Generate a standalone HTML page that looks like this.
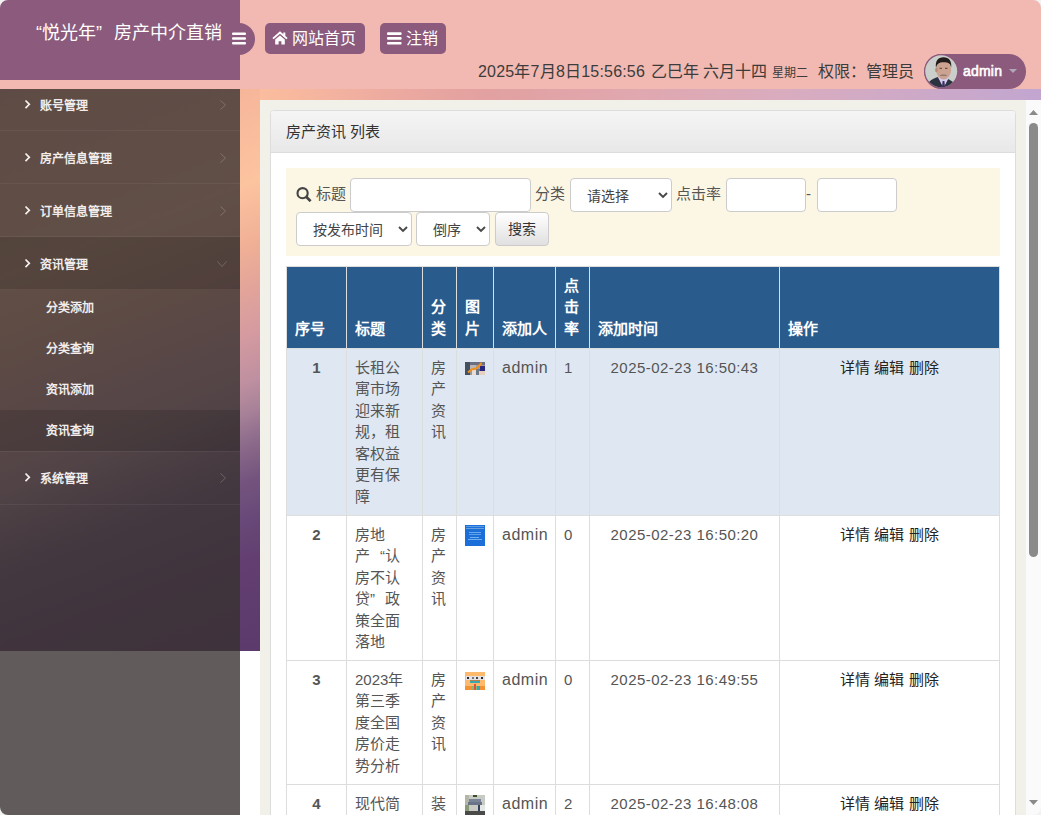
<!DOCTYPE html>
<html lang="zh-CN"><head><meta charset="utf-8"><style>
*{box-sizing:border-box;margin:0;padding:0}
html,body{width:1041px;height:815px;overflow:hidden;background:#fff;font-family:"Liberation Sans",sans-serif;}
.a{position:absolute;white-space:nowrap}
#bg{position:absolute;left:0;top:0;width:1041px;height:651px;
 background:linear-gradient(159deg,#f0ac96 0%,#f2b098 9.1%,#f6b69a 17.7%,#fdc4a0 26.5%,#f0b096 32.3%,#e2a49a 36.6%,#d49aa0 41.0%,#bf90a0 45.3%,#a88298 48.2%,#8e6c8c 51.0%,#74547e 54.8%,#684878 58.6%,#623f70 62.4%,#5c3a6c 71.0%,#5a386a 100%);}
#strip{position:absolute;left:260px;top:89px;width:781px;height:11px;background:linear-gradient(90deg,#fbbd9e 0%,#eba9a0 18%,#e2a0a0 29%,#e0a8b0 49%,#d8acc0 69%,#c2a6d0 100%)}
#header{position:absolute;left:0;top:0;width:1041px;height:89px;background:#f1b9b1;}
#logo{position:absolute;left:0;top:0;width:240px;height:80px;background:#8b5a7c;}
#toggle{position:absolute;left:223px;top:23px;width:32px;height:32px;border-radius:50%;background:#8b5a7c}
.btn{position:absolute;top:23px;height:31px;background:#8b5a7c;border-radius:5px;}
.w{color:#fff}
.info{color:#3c3c3c;font-size:16px;line-height:20px;top:62px}
#pill{position:absolute;left:924px;top:54px;width:102px;height:34.5px;border-radius:17.25px;background:#8b5a7c}
#sidebar{position:absolute;left:0;top:89px;width:240px;height:726px;background:rgba(55,48,47,0.79);overflow:hidden}
.mi{color:#f2ecea;font-size:12px;font-weight:bold;line-height:16px}
.sep{position:absolute;left:0;width:240px;height:1px;background:rgba(255,255,255,0.055)}
#frame{position:absolute;left:260px;top:100px;width:781px;height:715px;background:#f1f0e9}
#panel{position:absolute;left:270px;top:110px;width:746px;height:720px;background:#fff;border:1px solid #ddd;border-radius:4px}
#phead{position:absolute;left:0;top:0;width:744px;height:42px;background:linear-gradient(#f5f5f5,#e8e8e8);border-bottom:1px solid #ddd;border-radius:3px 3px 0 0}
#scroll{position:absolute;left:1026px;top:100px;width:15px;height:715px;background:#fafafa}
.lbl{color:#555;font-size:15px;line-height:20px}
.inp{position:absolute;background:#fff;border:1px solid #ccc;border-radius:4px}
.sel{position:absolute;background:#fff;border:1px solid #ccc;border-radius:4px;color:#555;font-size:14px}
.th{color:#fff;font-weight:bold;font-size:15px;line-height:21.43px}
.td{color:#555;font-size:15px;line-height:21.43px}
.op{color:#222;font-size:15px;line-height:21.43px}
</style></head><body>
<div id="bg"></div><div id="strip"></div>
<div id="header">
<div id="toggle"></div><div id="logo"></div>
<div class="a w" style="left:36px;top:22px;font-size:18px;line-height:22px">“悦光年”</div>
<div class="a w" style="left:114px;top:22px;font-size:18px;line-height:22px">房产中介直销</div>
<svg class="a" style="left:232px;top:32px" width="14" height="13" viewBox="0 0 14 13"><rect x="0" y="0.5" width="14" height="2.6" rx="1" fill="#fff"/><rect x="0" y="5.2" width="14" height="2.6" rx="1" fill="#fff"/><rect x="0" y="9.9" width="14" height="2.6" rx="1" fill="#fff"/></svg>
<div class="btn" style="left:265px;width:100px"></div>
<svg class="a" style="left:272px;top:31px" width="16" height="14" viewBox="0 0 16 14"><path d="M1 7.6 L8 1.6 L15 7.6" fill="none" stroke="#fff" stroke-width="1.9" stroke-linejoin="miter"/><rect x="11.3" y="1.5" width="2" height="4" fill="#fff"/><path d="M3.2 8.6 L8 4.4 L12.8 8.6 V13.6 H9.4 V10.2 H6.6 V13.6 H3.2 Z" fill="#fff"/></svg>
<div class="a w" style="left:292px;top:29px;font-size:16px;line-height:20px">网站首页</div>
<div class="btn" style="left:380px;width:66px"></div>
<svg class="a" style="left:387px;top:32px" width="15" height="13" viewBox="0 0 15 13"><rect x="0" y="0.3" width="14.6" height="2.6" rx="1" fill="#fff"/><rect x="0" y="5.1" width="14.6" height="2.6" rx="1" fill="#fff"/><rect x="0" y="9.9" width="14.6" height="2.6" rx="1" fill="#fff"/></svg>
<div class="a w" style="left:406px;top:29px;font-size:16px;line-height:20px">注销</div>
<div class="a info" style="left:478px;letter-spacing:0.2px">2025年7月8日15:56:56</div>
<div class="a info" style="left:651px">乙巳年</div>
<div class="a info" style="left:703px">六月十四</div>
<div class="a info" style="left:772px;font-size:12px;top:63px">星期二</div>
<div class="a info" style="left:818px">权限：管理员</div>
<div id="pill"></div>
<svg class="a" style="left:924px;top:54px" width="35" height="35" viewBox="0 0 35 35">
<defs><clipPath id="cc"><circle cx="17.2" cy="17.3" r="16"/></clipPath></defs>
<circle cx="17.2" cy="17.3" r="17" fill="#8b5a7c"/>
<g clip-path="url(#cc)"><rect width="35" height="35" fill="#cbcfcc"/>
<path d="M3 35 L5 28 C8 25 11 24 14 23 L19.5 33 L24 25 C26 26 28 27 30 29 L31 35 Z" fill="#2d3240"/>
<path d="M14 23 L19.5 34 L24 25 L22.5 23.5 Z" fill="#d4ccee"/>
<path d="M18.6 27 L20.4 27 L21.2 35 L17.8 35 Z" fill="#3c2e66"/>
<ellipse cx="19.6" cy="15.8" rx="7.6" ry="9.6" fill="#cca290"/>
<ellipse cx="12.4" cy="16" rx="1.3" ry="2.3" fill="#b88a78"/>
<path d="M12 14 C11 7 14 3.2 19.5 3.2 C25 3.2 28 7 27.2 13.5 C26.5 9.5 24.5 8.2 19.5 8.2 C15 8.2 13 9.5 12 14 Z" fill="#221c1c"/>
<path d="M15.5 21.5 C17.5 20.3 21.5 20.3 23.5 21.5 C21.5 22.3 17.5 22.3 15.5 21.5 Z" fill="#8c7a72"/>
<path d="M15.5 14.3 H18 M21 14.3 H23.5" stroke="#5a4038" stroke-width="1"/>
</g></svg>
<div class="a w" style="left:963px;top:62px;font-size:14px;line-height:18px;-webkit-text-stroke:0.6px #fff;letter-spacing:0.2px">admin</div>
<svg class="a" style="left:1009px;top:69px" width="8" height="4" viewBox="0 0 8 4"><path d="M0 0 H8 L4 4 Z" fill="#b0a8b8"/></svg>
</div>
<div id="sidebar">
<div class="a" style="left:0;top:148px;width:240px;height:52px;background:rgba(0,0,0,0.13)"></div>
<div class="a" style="left:0;top:321px;width:240px;height:41px;background:rgba(0,0,0,0.13)"></div>
<div class="sep" style="top:41px"></div>
<div class="sep" style="top:94px"></div>
<div class="sep" style="top:147px"></div>
<div class="sep" style="top:362px"></div>
<div class="sep" style="top:415px"></div>
<div class="a mi" style="left:40px;top:8.5px">账号管理</div>
<svg class="a" style="left:24px;top:9.5px" width="7.3" height="10.6" viewBox="0 0 7.3 10.6"><path d="M1.5 1.5 L5.3 5.3 L1.5 9.1" fill="none" stroke="#f5f0ee" stroke-width="1.7"/></svg>
<svg class="a" style="left:219.5px;top:10.5px" width="7" height="10" viewBox="0 0 7 10"><path d="M0.5 0.5 L5.5 5 L0.5 9.5" fill="none" stroke="rgba(255,255,255,0.2)" stroke-width="1"/></svg>
<div class="a mi" style="left:40px;top:61.5px">房产信息管理</div>
<svg class="a" style="left:24px;top:62.5px" width="7.3" height="10.6" viewBox="0 0 7.3 10.6"><path d="M1.5 1.5 L5.3 5.3 L1.5 9.1" fill="none" stroke="#f5f0ee" stroke-width="1.7"/></svg>
<svg class="a" style="left:219.5px;top:63.5px" width="7" height="10" viewBox="0 0 7 10"><path d="M0.5 0.5 L5.5 5 L0.5 9.5" fill="none" stroke="rgba(255,255,255,0.2)" stroke-width="1"/></svg>
<div class="a mi" style="left:40px;top:114.5px">订单信息管理</div>
<svg class="a" style="left:24px;top:115.5px" width="7.3" height="10.6" viewBox="0 0 7.3 10.6"><path d="M1.5 1.5 L5.3 5.3 L1.5 9.1" fill="none" stroke="#f5f0ee" stroke-width="1.7"/></svg>
<svg class="a" style="left:219.5px;top:116.5px" width="7" height="10" viewBox="0 0 7 10"><path d="M0.5 0.5 L5.5 5 L0.5 9.5" fill="none" stroke="rgba(255,255,255,0.2)" stroke-width="1"/></svg>
<div class="a mi" style="left:40px;top:167.5px">资讯管理</div>
<svg class="a" style="left:24px;top:168.5px" width="7.3" height="10.6" viewBox="0 0 7.3 10.6"><path d="M1.5 1.5 L5.3 5.3 L1.5 9.1" fill="none" stroke="#f5f0ee" stroke-width="1.7"/></svg>
<svg class="a" style="left:216.5px;top:171.5px" width="10" height="6" viewBox="0 0 10 6"><path d="M0.5 0.5 L5 5.5 L9.5 0.5" fill="none" stroke="rgba(255,255,255,0.2)" stroke-width="1"/></svg>
<div class="a mi" style="left:40px;top:381.5px">系统管理</div>
<svg class="a" style="left:24px;top:382.5px" width="7.3" height="10.6" viewBox="0 0 7.3 10.6"><path d="M1.5 1.5 L5.3 5.3 L1.5 9.1" fill="none" stroke="#f5f0ee" stroke-width="1.7"/></svg>
<svg class="a" style="left:219.5px;top:383.5px" width="7" height="10" viewBox="0 0 7 10"><path d="M0.5 0.5 L5.5 5 L0.5 9.5" fill="none" stroke="rgba(255,255,255,0.2)" stroke-width="1"/></svg>
<div class="a mi" style="left:46px;top:211.0px">分类添加</div>
<div class="a mi" style="left:46px;top:252.0px">分类查询</div>
<div class="a mi" style="left:46px;top:293.0px">资讯添加</div>
<div class="a mi" style="left:46px;top:334.0px">资讯查询</div>
</div>
<div id="frame"></div>
<div id="panel"><div id="phead"></div></div>
<div class="a" style="left:286px;top:122px;color:#333;font-size:15px;line-height:20px">房产资讯 列表</div>
<div class="a" style="left:286px;top:168px;width:714px;height:88px;background:#fcf6e4"></div>
<svg class="a" style="left:296px;top:186px" width="16" height="16" viewBox="0 0 16 16"><circle cx="6.6" cy="7.2" r="5.1" fill="none" stroke="#444" stroke-width="2.1"/><path d="M10.2 10.8 L14.6 15.2" stroke="#444" stroke-width="2.7" stroke-linecap="butt"/></svg>
<div class="a lbl" style="left:315.5px;top:184px">标题</div>
<div class="inp" style="left:350px;top:178px;width:181px;height:34px"></div>
<div class="a lbl" style="left:535px;top:184px">分类</div>
<div class="sel" style="left:570px;top:178px;width:102px;height:34px"></div><div class="a" style="left:587px;top:186.5px;color:#444;font-size:14px;line-height:18px">请选择</div><svg class="a" style="left:658px;top:192.0px" width="10" height="7" viewBox="0 0 10 7"><path d="M1 1 L5 5 L9 1" fill="none" stroke="#484848" stroke-width="1.9"/></svg>
<div class="a lbl" style="left:676px;top:184px">点击率</div>
<div class="inp" style="left:726px;top:178px;width:80px;height:34px"></div>
<div class="a lbl" style="left:806px;top:184px">-</div>
<div class="inp" style="left:817px;top:178px;width:80px;height:34px"></div>
<div class="sel" style="left:296px;top:212px;width:116px;height:34px"></div><div class="a" style="left:313px;top:220.5px;color:#444;font-size:14px;line-height:18px">按发布时间</div><svg class="a" style="left:398px;top:226.0px" width="10" height="7" viewBox="0 0 10 7"><path d="M1 1 L5 5 L9 1" fill="none" stroke="#484848" stroke-width="1.9"/></svg>
<div class="sel" style="left:416px;top:212px;width:74px;height:34px"></div><div class="a" style="left:433px;top:220.5px;color:#444;font-size:14px;line-height:18px">倒序</div><svg class="a" style="left:476px;top:226.0px" width="10" height="7" viewBox="0 0 10 7"><path d="M1 1 L5 5 L9 1" fill="none" stroke="#484848" stroke-width="1.9"/></svg>
<div class="a" style="left:495px;top:212px;width:54px;height:34px;border:1px solid #ccc;border-radius:4px;background:linear-gradient(#fff,#e0e0e0)"></div>
<div class="a" style="left:508px;top:220px;color:#333;font-size:14px;line-height:18px">搜索</div>
<div class="a" style="left:286px;top:266px;width:714px;height:82px;background:#2a5b8d"></div>
<div class="a" style="left:286px;top:348px;width:714px;height:167px;background:#dfe8f2"></div>
<div class="a" style="left:286px;top:266px;width:714px;height:1px;background:#ddd"></div>
<div class="a" style="left:286px;top:348px;width:714px;height:1px;background:#ddd"></div>
<div class="a" style="left:286px;top:515px;width:714px;height:1px;background:#ddd"></div>
<div class="a" style="left:286px;top:660px;width:714px;height:1px;background:#ddd"></div>
<div class="a" style="left:286px;top:784px;width:714px;height:1px;background:#ddd"></div>
<div class="a" style="left:286px;top:266px;width:1px;height:560px;background:#ddd"></div>
<div class="a" style="left:346px;top:266px;width:1px;height:560px;background:#ddd"></div>
<div class="a" style="left:422px;top:266px;width:1px;height:560px;background:#ddd"></div>
<div class="a" style="left:456px;top:266px;width:1px;height:560px;background:#ddd"></div>
<div class="a" style="left:493px;top:266px;width:1px;height:560px;background:#ddd"></div>
<div class="a" style="left:555px;top:266px;width:1px;height:560px;background:#ddd"></div>
<div class="a" style="left:589px;top:266px;width:1px;height:560px;background:#ddd"></div>
<div class="a" style="left:779px;top:266px;width:1px;height:560px;background:#ddd"></div>
<div class="a" style="left:999px;top:266px;width:1px;height:560px;background:#ddd"></div>
<div class="a th" style="left:295px;top:317.57px">序号</div>
<div class="a th" style="left:355px;top:317.57px">标题</div>
<div class="a th" style="left:431px;top:296.14px">分<br>类</div>
<div class="a th" style="left:465px;top:296.14px">图<br>片</div>
<div class="a th" style="left:502px;top:317.57px">添加人</div>
<div class="a th" style="left:564px;top:274.71px">点<br>击<br>率</div>
<div class="a th" style="left:598px;top:317.57px">添加时间</div>
<div class="a th" style="left:788px;top:317.57px">操作</div>
<div class="a td" style="left:286px;width:61px;text-align:center;top:357px;font-weight:bold">1</div>
<div class="a td" style="left:355px;top:357px">长租公<br>寓市场<br>迎来新<br>规，租<br>客权益<br>更有保<br>障</div>
<div class="a td" style="left:431px;top:357px">房<br>产<br>资<br>讯</div>
<div class="a td" style="left:502px;top:357px;font-size:16px;letter-spacing:0.5px">admin</div>
<div class="a td" style="left:564px;top:357px">1</div>
<div class="a td" style="left:589px;width:191px;text-align:center;top:357px;letter-spacing:0.45px">2025-02-23 16:50:43</div>
<div class="a op" style="left:779px;width:221px;text-align:center;top:357px">详情 编辑 删除</div>
<div class="a td" style="left:286px;width:61px;text-align:center;top:524px;font-weight:bold">2</div>
<div class="a td" style="left:355px;top:524px">房地<br>产<span style="display:inline-block;width:15px;text-align:right">“</span>认<br>房不认<br>贷<span style="display:inline-block;width:15px;text-align:left">”</span>政<br>策全面<br>落地</div>
<div class="a td" style="left:431px;top:524px">房<br>产<br>资<br>讯</div>
<div class="a td" style="left:502px;top:524px;font-size:16px;letter-spacing:0.5px">admin</div>
<div class="a td" style="left:564px;top:524px">0</div>
<div class="a td" style="left:589px;width:191px;text-align:center;top:524px;letter-spacing:0.45px">2025-02-23 16:50:20</div>
<div class="a op" style="left:779px;width:221px;text-align:center;top:524px">详情 编辑 删除</div>
<div class="a td" style="left:286px;width:61px;text-align:center;top:669px;font-weight:bold">3</div>
<div class="a td" style="left:355px;top:669px">2023年<br>第三季<br>度全国<br>房价走<br>势分析</div>
<div class="a td" style="left:431px;top:669px">房<br>产<br>资<br>讯</div>
<div class="a td" style="left:502px;top:669px;font-size:16px;letter-spacing:0.5px">admin</div>
<div class="a td" style="left:564px;top:669px">0</div>
<div class="a td" style="left:589px;width:191px;text-align:center;top:669px;letter-spacing:0.45px">2025-02-23 16:49:55</div>
<div class="a op" style="left:779px;width:221px;text-align:center;top:669px">详情 编辑 删除</div>
<div class="a td" style="left:286px;width:61px;text-align:center;top:793px;font-weight:bold">4</div>
<div class="a td" style="left:355px;top:793px">现代简<br>约</div>
<div class="a td" style="left:431px;top:793px">装<br>修</div>
<div class="a td" style="left:502px;top:793px;font-size:16px;letter-spacing:0.5px">admin</div>
<div class="a td" style="left:564px;top:793px">2</div>
<div class="a td" style="left:589px;width:191px;text-align:center;top:793px;letter-spacing:0.45px">2025-02-23 16:48:08</div>
<div class="a op" style="left:779px;width:221px;text-align:center;top:793px">详情 编辑 删除</div>
<svg class="a" style="left:465px;top:362px" width="20" height="13" viewBox="0 0 20 13">
<rect width="20" height="13" fill="#9a98a0"/>
<rect x="0" y="0" width="20" height="3" fill="#6a6e80"/>
<rect x="0" y="0" width="5" height="13" fill="#445060"/>
<rect x="5" y="3" width="6" height="5" fill="#b8b4b8"/>
<rect x="7" y="8" width="7" height="5" fill="#e8dcd4"/>
<rect x="11" y="7" width="4" height="6" fill="#6a7888"/>
<rect x="14" y="9" width="6" height="4" fill="#e8d0c0"/>
<rect x="15" y="4" width="5" height="5" fill="#262680"/>
<path d="M3 10.5 L6.5 7.5 L11 6.5 L14 4 L16.5 1" stroke="#f0901e" stroke-width="2" fill="none"/>
</svg>
<svg class="a" style="left:465px;top:525px" width="20" height="21" viewBox="0 0 20 21">
<rect width="20" height="21" fill="#1c6fd8"/>
<rect x="1" y="1" width="18" height="1" fill="#5a9ae0"/>
<rect x="1" y="3" width="18" height="1" fill="#6aa0d8"/>
<rect x="4" y="7" width="12" height="1" fill="#6aa8ec"/>
<rect x="4" y="9" width="12" height="1" fill="#5aa0ea"/>
<rect x="5" y="12" width="9" height="1" fill="#70b0f0"/>
<rect x="3" y="14" width="14" height="1" fill="#70b0f0"/>
</svg>
<svg class="a" style="left:465px;top:672px" width="20" height="18" viewBox="0 0 20 18">
<rect width="20" height="18" fill="#fdba6c"/>
<rect x="1" y="4" width="19" height="4" fill="#e4e2e4"/>
<rect x="2" y="5" width="2" height="2" fill="#2a2a2a"/><rect x="7" y="5" width="2" height="2" fill="#777"/><rect x="11" y="5" width="2" height="2" fill="#444"/><rect x="16" y="5" width="2" height="2" fill="#2a2a2a"/>
<rect x="5" y="8" width="10" height="1" fill="#b8804a"/>
<rect x="5" y="9" width="10" height="2" fill="#3aa8b0"/>
<rect x="0" y="14" width="20" height="4" fill="#f29232"/>
<rect x="7" y="14" width="8" height="4" fill="#8ab870"/>
<rect x="9" y="12" width="2" height="6" fill="#e05040"/>
<rect x="12" y="14" width="3" height="4" fill="#30a8c0"/>
</svg>
<svg class="a" style="left:465px;top:795px" width="20" height="20" viewBox="0 0 20 20">
<rect width="20" height="20" fill="#c8cac4"/>
<rect x="0" y="0" width="4" height="20" fill="#b4b6a8"/>
<rect x="8" y="0" width="4" height="2" fill="#3a5028"/>
<rect x="4" y="4" width="12" height="3" fill="#7a8498"/>
<rect x="3" y="7" width="14" height="3" fill="#6a7488"/>
<rect x="13" y="10" width="2" height="6" fill="#34405a"/>
<rect x="15" y="10" width="5" height="8" fill="#e4e8e6"/>
<rect x="0" y="10" width="4" height="6" fill="#8a9a78"/>
<rect x="0" y="16" width="20" height="4" fill="#4a4a48"/>
</svg>
<div id="scroll"></div>
<svg class="a" style="left:1029px;top:110px" width="9" height="5" viewBox="0 0 9 5"><path d="M0 5 L4.5 0 L9 5 Z" fill="#8a8a8a"/></svg>
<div class="a" style="left:1029px;top:123px;width:9px;height:434px;border-radius:4.5px;background:#8a8a8a"></div>
<svg class="a" style="left:1029px;top:800px" width="9" height="5" viewBox="0 0 9 5"><path d="M0 0 L4.5 5 L9 0 Z" fill="#8a8a8a"/></svg>
<svg class="a" style="left:0px;top:0px" width="8" height="8" viewBox="0 0 8 8"><g transform="rotate(0 4 4)"><path d="M0 0 H8 A8 8 0 0 0 0 8 Z" fill="#f2f2f2"/></g></svg>
<svg class="a" style="left:1033px;top:0px" width="8" height="8" viewBox="0 0 8 8"><g transform="rotate(90 4 4)"><path d="M0 0 H8 A8 8 0 0 0 0 8 Z" fill="#f2f2f2"/></g></svg>
<svg class="a" style="left:1033px;top:807px" width="8" height="8" viewBox="0 0 8 8"><g transform="rotate(180 4 4)"><path d="M0 0 H8 A8 8 0 0 0 0 8 Z" fill="#f2f2f2"/></g></svg>
<svg class="a" style="left:0px;top:807px" width="8" height="8" viewBox="0 0 8 8"><g transform="rotate(270 4 4)"><path d="M0 0 H8 A8 8 0 0 0 0 8 Z" fill="#f2f2f2"/></g></svg>
</body></html>
